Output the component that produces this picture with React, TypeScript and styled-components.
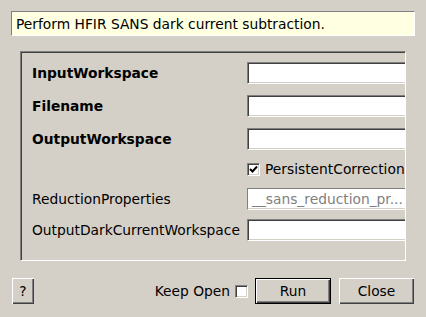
import React from "react";
import styled, { createGlobalStyle } from "styled-components";

const Global = createGlobalStyle`
  html, body { margin: 0; padding: 0; background: #d4d0c8; }
  body { font-family: "DejaVu Sans", "Liberation Sans", sans-serif; font-size: 13.8px; color: #000; }
`;

const Dialog = styled.div`
  width: 426px;
  height: 317px;
  background: #d4d0c8;
  display: flex;
  flex-direction: column;
  box-sizing: border-box;
  padding-top: 11px;
`;

const Description = styled.div`
  margin-left: 11px;
  width: 404px;
  height: 25px;
  box-sizing: border-box;
  background: #ffffe1;
  border-top: 1px solid #808080;
  border-left: 1px solid #808080;
  border-right: 1px solid #ffffff;
  border-bottom: 1px solid #ffffff;
  padding-left: 4px;
  display: flex;
  align-items: center;
  white-space: nowrap;
`;

const Frame = styled.div`
  margin-top: 15px;
  margin-left: 20px;
  width: 386px;
  height: 210px;
  box-sizing: border-box;
  border-top: 1px solid #808080;
  border-left: 1px solid #808080;
  border-right: 1px solid #ffffff;
  border-bottom: 1px solid #ffffff;
  box-shadow: inset 1px 1px 0 #404040;
  overflow: hidden;
`;

const Form = styled.div`
  padding: 9px 0 0 10px;
  margin: 1px 0 0 1px;
  height: calc(100% - 1px);
  width: calc(100% - 1px);
  box-sizing: border-box;
  overflow: hidden;
  display: flex;
  flex-direction: column;
`;

const Row = styled.div<{ $gap: number }>`
  display: grid;
  grid-template-columns: 215px 200px;
  align-items: center;
  height: 22px;
  margin-top: ${(p) => p.$gap}px;
  flex: none;
`;

const Label = styled.span<{ $bold?: boolean }>`
  font-weight: ${(p) => (p.$bold ? "bold" : "normal")};
  white-space: nowrap;
`;

const Field = styled.div<{ $disabled?: boolean }>`
  height: 22px;
  box-sizing: border-box;
  background: #ffffff;
  border-top: 1px solid #808080;
  border-left: 1px solid #808080;
  border-right: 1px solid #ffffff;
  border-bottom: 1px solid #ffffff;
  box-shadow: ${(p) =>
    p.$disabled
      ? "inset -1px -1px 0 #d4d0c8"
      : "inset 1px 1px 0 #404040, inset -1px -1px 0 #d4d0c8"};
  color: #808080;
  padding-left: 4px;
  display: flex;
  align-items: center;
  white-space: nowrap;
  overflow: hidden;
`;

const CheckRow = styled.label`
  display: flex;
  align-items: center;
  gap: 5px;
  white-space: nowrap;
`;

const Box = styled.span`
  width: 13px;
  height: 13px;
  box-sizing: border-box;
  background: #ffffff;
  border-top: 1px solid #808080;
  border-left: 1px solid #808080;
  border-right: 1px solid #ffffff;
  border-bottom: 1px solid #ffffff;
  box-shadow: inset 1px 1px 0 #404040, inset -1px -1px 0 #d4d0c8;
  display: inline-flex;
  align-items: center;
  justify-content: center;
  flex: none;
`;

const Footer = styled.div`
  display: flex;
  align-items: center;
  margin-top: 17px;
  padding: 0 12px;
`;

const Button = styled.button<{ $w: number; $default?: boolean }>`
  width: ${(p) => p.$w}px;
  height: 26px;
  box-sizing: border-box;
  background: #d4d0c8;
  font-family: "DejaVu Sans", "Liberation Sans", sans-serif;
  font-size: 13.8px;
  color: #000;
  padding: 0;
  border: ${(p) => (p.$default ? "1px solid #000" : "none")};
  box-shadow: inset 1px 1px 0 #ffffff, inset -1px -1px 0 #404040, inset -2px -2px 0 #808080;
`;

const Spacer = styled.div`
  flex: 1;
`;

const KeepOpen = styled.label`
  display: flex;
  align-items: center;
  gap: 5px;
  margin-right: 7px;
  white-space: nowrap;
`;

const Check = () => (
  <svg width="9" height="9" viewBox="0 0 9 9">
    <path d="M1 4 L3.5 6.5 L8 1.5" stroke="#000" strokeWidth="2" fill="none" />
  </svg>
);

export default function App() {
  return (
    <>
      <Global />
      <Dialog>
        <Description>Perform HFIR SANS dark current subtraction.</Description>
        <Frame>
          <Form>
            <Row $gap={0}>
              <Label $bold>InputWorkspace</Label>
              <Field />
            </Row>
            <Row $gap={11}>
              <Label $bold>Filename</Label>
              <Field />
            </Row>
            <Row $gap={11}>
              <Label $bold>OutputWorkspace</Label>
              <Field />
            </Row>
            <Row $gap={8}>
              <span />
              <CheckRow>
                <Box>
                  <Check />
                </Box>
                PersistentCorrection
              </CheckRow>
            </Row>
            <Row $gap={8}>
              <Label>ReductionProperties</Label>
              <Field $disabled>__sans_reduction_pr...</Field>
            </Row>
            <Row $gap={9}>
              <Label>OutputDarkCurrentWorkspace</Label>
              <Field />
            </Row>
          </Form>
        </Frame>
        <Footer>
          <Button $w={22}>?</Button>
          <Spacer />
          <KeepOpen>
            Keep Open
            <Box />
          </KeepOpen>
          <Button $w={76} $default>
            Run
          </Button>
          <Button $w={75} style={{ marginLeft: 8 }}>
            Close
          </Button>
        </Footer>
      </Dialog>
    </>
  );
}
